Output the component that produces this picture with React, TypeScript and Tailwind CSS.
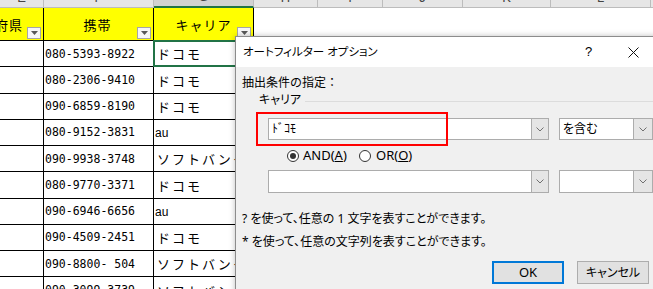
import React from "react";

const rows = [
  { phone: "080-5393-8922", carrier: "ドコモ" },
  { phone: "080-2306-9410", carrier: "ドコモ" },
  { phone: "090-6859-8190", carrier: "ドコモ" },
  { phone: "080-9152-3831", carrier: "au" },
  { phone: "090-9938-3748", carrier: "ソフトバンク" },
  { phone: "080-9770-3371", carrier: "ドコモ" },
  { phone: "090-6946-6656", carrier: "au" },
  { phone: "090-4509-2451", carrier: "ドコモ" },
  { phone: "090-8800- 504", carrier: "ソフトバンク" },
  { phone: "090-3099-3739", carrier: "ソフトバンク" },
];

const jp = "font-['Noto_Sans_CJK_JP',sans-serif]";
const ui = "font-['Noto_Sans','Noto_Sans_CJK_JP',sans-serif] [font-feature-settings:'palt']";

function FilterButton() {
  return (
    <div className="absolute right-[2px] bottom-[1px] flex h-[12px] w-[14px] items-center justify-center border border-[#a6a6a6] bg-[#f7f7f7]">
      <svg width="7" height="4" viewBox="0 0 7 4">
        <polygon points="0,0 7,0 3.5,4" fill="#595959" />
      </svg>
    </div>
  );
}

function Chevron() {
  return (
    <svg width="8" height="5" viewBox="0 0 8 5">
      <polyline points="0.5,0.5 4,4 7.5,0.5" fill="none" stroke="#707070" strokeWidth="1" />
    </svg>
  );
}

function Combo({ width, height, text, btn = 17 }: { width: string; height: string; text?: string; btn?: number }) {
  return (
    <div className={`flex ${width} ${height} border border-[#acacac] bg-white`}>
      <div className={`flex flex-1 items-center pl-[3px] text-[12px] text-black ${ui}`}>{text}</div>
      <div
        className={`flex items-center justify-center border-l border-[#acacac] bg-[#e5e5e5] ${btn === 17 ? "w-[17px]" : "w-[19px]"}`}
      >
        <Chevron />
      </div>
    </div>
  );
}

function Spreadsheet() {
  const letters = [
    { l: "E", w: "w-[44px]" },
    { l: "F", w: "w-[110px]" },
    { l: "G", w: "w-[100px]", sel: true },
    { l: "H", w: "w-[64px]" },
    { l: "I", w: "w-[65px]" },
    { l: "J", w: "w-[80px]" },
    { l: "K", w: "w-[88px]" },
    { l: "L", w: "w-[100px]" },
    { l: "M", w: "w-[60px]" },
  ];
  return (
    <div className="flex flex-col bg-white">
      {/* column letters, mostly scrolled out of view */}
      <div className="flex h-[8px] overflow-hidden">
        {letters.map((c) => (
          <div
            key={c.l}
            className={`flex shrink-0 items-end justify-center overflow-hidden border-r border-[#bcbcbc] font-['Liberation_Sans',sans-serif] text-[13px] leading-none text-[#444] ${c.w} ${
              c.sel ? "border-b-2 border-b-[#217346] bg-[#d2d2d2]" : "border-b border-b-[#bcbcbc] bg-[#e6e6e6]"
            }`}
          >
            <span className="mb-[3px]">{c.l}</span>
          </div>
        ))}
      </div>

      {/* header row */}
      <div className={`flex h-[33px] ${jp} text-[13px] tracking-[1px] text-black`}>
        <div className="relative flex w-[44px] shrink-0 items-center overflow-hidden border-r border-b border-black bg-[#ffff00] pt-[2px]">
          <span className="ml-[-19px] whitespace-nowrap">道府県</span>
          <FilterButton />
        </div>
        <div className="relative flex w-[110px] shrink-0 items-center justify-center border-r border-b border-black bg-[#ffff00] pt-[2px]">
          <span className="mr-[2px]">携帯</span>
          <FilterButton />
        </div>
        <div className="relative flex w-[100px] shrink-0 items-center justify-center border-r border-b border-black bg-[#ffff00] pt-[2px]">
          <span>キャリア</span>
          <FilterButton />
        </div>
        <div className="flex-1 border-b border-[#e2e2e2]" />
      </div>

      {rows.map((r, i) => (
        <div key={i} className="flex h-[26.25px] shrink-0">
          <div className="w-[44px] shrink-0 border-r border-b border-black" />
          <div className="flex w-[110px] shrink-0 items-center overflow-hidden border-r border-b border-black pt-[1px] pl-[1px] font-['DejaVu_Sans_Mono',monospace] text-[11.5px] whitespace-pre text-black">
            {r.phone}
          </div>
          <div className="relative flex w-[100px] shrink-0 items-center border-r border-b border-black pt-[1px]">
            {r.carrier === "au" ? (
              <span className="pl-[1px] font-['Liberation_Sans',sans-serif] text-[12px] text-black">au</span>
            ) : (
              <span className={`overflow-hidden pl-[3px] whitespace-nowrap ${jp} text-[13px] tracking-[2px] text-black`}>
                {r.carrier}
              </span>
            )}
            {i === 0 && (
              <div className="absolute top-[-1px] right-[-1px] bottom-[-1px] left-[-1px] z-10 border-2 border-[#217346]" />
            )}
          </div>
          <div className="flex-1" />
        </div>
      ))}
    </div>
  );
}

function Dialog() {
  return (
    <div className="absolute top-[36px] left-[235px] z-20 h-[270px] w-[440px] border border-[#8c8c8c] bg-[#f0f0f0] shadow-[0_0_6px_rgba(0,0,0,0.25)]">
      {/* title bar */}
      <div className="flex h-[30px] items-center bg-white pr-[18px]">
        <span className={`flex-1 pl-[7px] text-[11.5px] text-black ${ui}`}>オートフィルター オプション</span>
        <span className="flex w-[45px] justify-center font-['Liberation_Sans',sans-serif] text-[13px] text-black">?</span>
        <span className="flex w-[45px] justify-center">
          <svg width="11" height="11" viewBox="0 0 11 11">
            <path d="M0.5 0.5 L10.5 10.5 M10.5 0.5 L0.5 10.5" stroke="#111" strokeWidth="1" />
          </svg>
        </span>
      </div>

      {/* body */}
      <div className={`flex flex-col px-[6px] text-[12px] text-black ${ui}`}>
        <div className="mt-[8px] h-[16px] leading-[16px] [font-feature-settings:normal]">抽出条件の指定：</div>

        <div className="mt-[1px] flex h-[16px] items-center pl-[17px]">
          <span className="leading-[16px] whitespace-nowrap">キャリア</span>
          <div className="mt-[2px] ml-[4px] h-px flex-1 bg-[#dcdcdc]" />
        </div>

        <div className="mt-[10px] flex gap-[10px] pl-[26px]">
          <Combo width="w-[281px]" height="h-[22px]" text="ﾄﾞｺﾓ" />
          <Combo width="w-[94px]" height="h-[22px]" text="を含む" btn={19} />
        </div>

        <div className="mt-[8px] flex h-[16px] items-center pl-[45px] text-[13px]">
          <div className="flex w-[72px] items-center">
            <span className="flex h-[12px] w-[12px] items-center justify-center rounded-full border border-[#333] bg-white">
              <span className="h-[6px] w-[6px] rounded-full bg-[#333]" />
            </span>
            <span className="ml-[4px]">
              AND(<span className="underline">A</span>)
            </span>
          </div>
          <span className="h-[12px] w-[12px] rounded-full border border-[#333] bg-white" />
          <span className="ml-[5px]">
            OR(<span className="underline">O</span>)
          </span>
        </div>

        <div className="mt-[6px] flex gap-[10px] pl-[26px]">
          <Combo width="w-[281px]" height="h-[23px]" />
          <Combo width="w-[94px]" height="h-[23px]" btn={19} />
        </div>

        <div className="mt-[18px] h-[16px] leading-[16px] whitespace-pre">? を使って、任意の 1 文字を表すことができます。</div>
        <div className="mt-[7px] h-[16px] leading-[16px] whitespace-pre">* を使って、任意の文字列を表すことができます。</div>

        <div className="mt-[11px] flex gap-[13px] pl-[250px]">
          <button
            type="button"
            className="flex h-[23px] w-[72px] items-center justify-center border-2 border-[#0078d7] bg-[#e1e1e1] text-[13px]"
          >
            OK
          </button>
          <button
            type="button"
            className="flex h-[23px] w-[72px] items-center justify-center border border-[#adadad] bg-[#e1e1e1] text-[12px]"
          >
            キャンセル
          </button>
        </div>
      </div>

      {/* highlight drawn over the first condition */}
      <div className="absolute top-[75px] left-[20px] h-[34px] w-[192px] border-2 border-[#ff0000]" />
    </div>
  );
}

export default function App() {
  return (
    <div className="relative h-[289px] w-[653px] overflow-hidden bg-white">
      <Spreadsheet />
      <Dialog />
    </div>
  );
}
